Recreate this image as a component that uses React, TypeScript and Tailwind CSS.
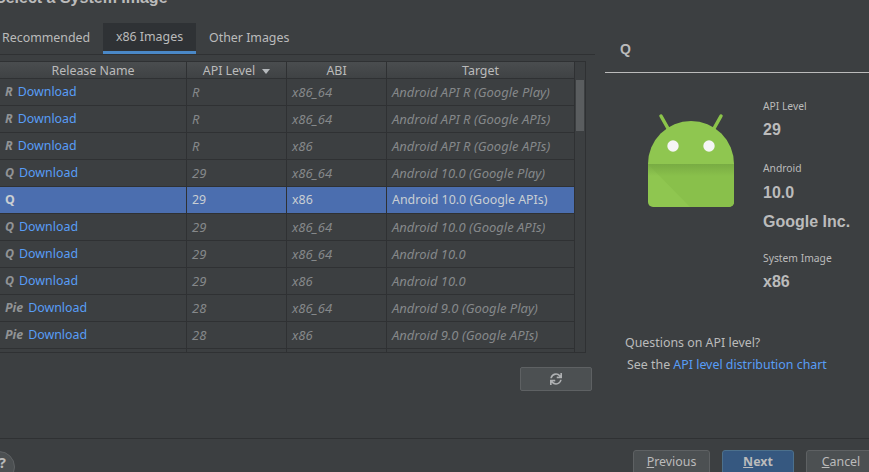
import { FaSync } from 'react-icons/fa'

type Row = { release: string; download: boolean; api: string; abi: string; target: string; selected?: boolean }

const rows: Row[] = [
  { release: 'R', download: true, api: 'R', abi: 'x86_64', target: 'Android API R (Google Play)' },
  { release: 'R', download: true, api: 'R', abi: 'x86_64', target: 'Android API R (Google APIs)' },
  { release: 'R', download: true, api: 'R', abi: 'x86', target: 'Android API R (Google APIs)' },
  { release: 'Q', download: true, api: '29', abi: 'x86_64', target: 'Android 10.0 (Google Play)' },
  { release: 'Q', download: false, api: '29', abi: 'x86', target: 'Android 10.0 (Google APIs)', selected: true },
  { release: 'Q', download: true, api: '29', abi: 'x86_64', target: 'Android 10.0 (Google APIs)' },
  { release: 'Q', download: true, api: '29', abi: 'x86_64', target: 'Android 10.0' },
  { release: 'Q', download: true, api: '29', abi: 'x86', target: 'Android 10.0' },
  { release: 'Pie', download: true, api: '28', abi: 'x86_64', target: 'Android 9.0 (Google Play)' },
  { release: 'Pie', download: true, api: '28', abi: 'x86', target: 'Android 9.0 (Google APIs)' },
]

function AndroidLogo() {
  return (
    <svg width="86" height="94" viewBox="0 0 86 94">
      <defs>
        <linearGradient id="band" x1="0" y1="0" x2="0" y2="1">
          <stop offset="0" stopColor="#74a641" stopOpacity="0.8" />
          <stop offset="1" stopColor="#74a641" stopOpacity="0" />
        </linearGradient>
      </defs>
      <path d="M13 3 L22 19 M73 3 L64 19" stroke="#8bc34a" strokeWidth="3.5" strokeLinecap="round" />
      <path d="M0 51 A43 43 0 0 1 86 51 Z" fill="#8fc650" />
      <path d="M0 51 H86 V89 A5 5 0 0 1 81 94 H5 A5 5 0 0 1 0 89 Z" fill="#8fc650" />
      <path d="M0 51 H86 V89 A5 5 0 0 1 81 94 H42 Z" fill="#89c04b" />
      <rect x="0" y="51" width="86" height="12" fill="url(#band)" />
      <circle cx="25" cy="33" r="5.7" fill="#f5f5f5" />
      <circle cx="61" cy="33" r="5.7" fill="#f5f5f5" />
    </svg>
  )
}

function HeaderCell({ label, sort }: { label: string; sort?: boolean }) {
  return (
    <div className="flex items-center justify-center gap-[7px] border-r border-[#2f3133] last:border-r-0">
      <span>{label}</span>
      {sort && <span className="h-0 w-0 border-x-4 border-t-[5px] border-x-transparent border-t-[#b5b9bc]" />}
    </div>
  )
}

function TableRow({ row }: { row: Row }) {
  const muted = row.selected ? 'text-[12.4px] text-[#c9ced3]' : 'text-[13px] italic text-[#85888a]'
  return (
    <div
      className={`grid h-[27px] grid-cols-[187px_100px_100px_187px] items-stretch border-b border-[#2f3133] ${
        row.selected ? 'bg-[#4b6eaf]' : ''
      }`}
    >
      <div className="flex items-center gap-[5px] border-r border-[#2f3133] pt-[1px] pl-[5px]">
        <span className={`font-bold ${row.selected ? 'text-[#c9ced3]' : 'italic text-[#919395]'}`}>{row.release}</span>
        {row.download && <span className="text-[#589df6]">Download</span>}
      </div>
      <div className={`flex items-center border-r border-[#2f3133] pt-[1px] pl-[5px] ${muted}`}>{row.api}</div>
      <div className={`flex items-center border-r border-[#2f3133] pt-[1px] pl-[5px] ${muted}`}>{row.abi}</div>
      <div className={`flex items-center pt-[1px] pl-[5px] ${muted}`}>{row.target}</div>
    </div>
  )
}

export default function App() {
  return (
    <div className="flex h-[472px] w-[869px] overflow-hidden bg-[#3c3f41] font-['Noto_Sans',sans-serif] text-[12.4px] text-[#bbbbbb]">
      <div className="flex w-[595px] shrink-0 flex-col">
        <div className="-mt-[11px] -ml-[5px] h-[34px] shrink-0 font-['Liberation_Sans',sans-serif] text-[16px] leading-[18px] font-bold whitespace-nowrap">
          Select a System Image
        </div>
        <div className="flex h-[32px] shrink-0 border-b border-[#2f3133]">
          <div className="flex w-[103px] items-center pb-[1px] pl-[2px]">Recommended</div>
          <div className="flex w-[93px] items-center justify-center border-b-[3px] border-[#4a88c7] bg-[#2f3235] pt-[1px]">
            x86 Images
          </div>
          <div className="flex w-[94px] items-center pb-[1px] pl-[13px]">Other Images</div>
        </div>
        <div className="mt-[6px] flex h-[292px] w-[586px] shrink-0 border-y border-r border-[#2f3133]">
          <div className="w-[575px] shrink-0 overflow-hidden border-r border-[#2f3133]">
            <div className="grid h-[17px] grid-cols-[187px_100px_100px_187px] border-b border-[#2f3133] bg-linear-to-b from-[#4a4d4f] to-[#3f4244]">
              <HeaderCell label="Release Name" />
              <HeaderCell label="API Level" sort />
              <HeaderCell label="ABI" />
              <HeaderCell label="Target" />
            </div>
            {rows.map((row, i) => (
              <TableRow key={i} row={row} />
            ))}
            <div className="grid h-[3px] grid-cols-[187px_100px_100px_187px]">
              <div className="border-r border-[#2f3133]" />
              <div className="border-r border-[#2f3133]" />
              <div className="border-r border-[#2f3133]" />
            </div>
          </div>
          <div className="flex-1 pt-[18px] pl-[1px]">
            <div className="h-[51px] w-[8px] bg-[#5a5d5f]" />
          </div>
        </div>
        <div className="mt-[14px] flex shrink-0 justify-end pr-[3px]">
          <button className="flex h-[24px] w-[72px] items-center justify-center rounded-[2px] border border-[#5e6163] bg-[#4c5052] text-[#afb1b3]">
            <FaSync size={12} />
          </button>
        </div>
        <div className="mt-[47px] shrink-0 border-t border-[#2f3133] pt-[12px]">
          <div className="-ml-[17px] flex h-[32px] w-[32px] items-center justify-end rounded-full border border-[#5e6163] bg-[#4c5052] pr-[8px] pb-[9px] text-[15px] font-bold">
            ?
          </div>
        </div>
      </div>
      <div className="flex min-w-0 flex-1 flex-col">
        <div className="ml-[10px] h-[73px] shrink-0 border-b border-[#bbbbbb] pt-[41px] pl-[15px] text-[14px] font-bold">
          <div className="font-['Liberation_Sans',sans-serif] leading-[16px]">Q</div>
        </div>
        <div className="flex h-[261px] shrink-0 pl-[53px]">
          <div className="w-[115px] pt-[40px]">
            <AndroidLogo />
          </div>
          <div className="pt-[26px] text-[10.3px] leading-[14px] text-[#bbbbbb]">
            <div>API Level</div>
            <div className="mt-[8px] font-['Liberation_Sans',sans-serif] text-[16px] leading-[18px] font-bold">29</div>
            <div className="mt-[22px]">Android</div>
            <div className="mt-[9px] font-['Liberation_Sans',sans-serif] text-[16px] leading-[18px] font-bold">10.0</div>
            <div className="mt-[11px] font-['Liberation_Sans',sans-serif] text-[16px] leading-[18px] font-bold whitespace-nowrap">Google Inc.</div>
            <div className="mt-[20px]">System Image</div>
            <div className="mt-[8px] font-['Liberation_Sans',sans-serif] text-[16px] leading-[18px] font-bold">x86</div>
          </div>
        </div>
        <div className="shrink-0 pl-[30px] leading-[18px]">
          <div>Questions on API level?</div>
          <div className="mt-[4px] pl-[2px]">
            See the <span className="text-[#589df6]">API level distribution chart</span>
          </div>
        </div>
        <div className="mt-[64px] shrink-0 border-t border-[#2f3133] pt-[11px]">
          <div className="flex gap-[12px] pl-[38px]">
            <button className="h-[30px] w-[77px] shrink-0 rounded-[3px] border border-[#5e6163] bg-[#4c5052] pb-[5px]">
              <span className="underline">P</span>revious
            </button>
            <button className="h-[30px] w-[72px] shrink-0 rounded-[3px] border border-[#4c708c] bg-[#365880] pb-[5px] font-bold">
              <span className="underline">N</span>ext
            </button>
            <button className="h-[30px] w-[70px] shrink-0 rounded-[3px] border border-[#5e6163] bg-[#4c5052] pb-[5px]">
              <span className="underline">C</span>ancel
            </button>
          </div>
        </div>
      </div>
    </div>
  )
}
